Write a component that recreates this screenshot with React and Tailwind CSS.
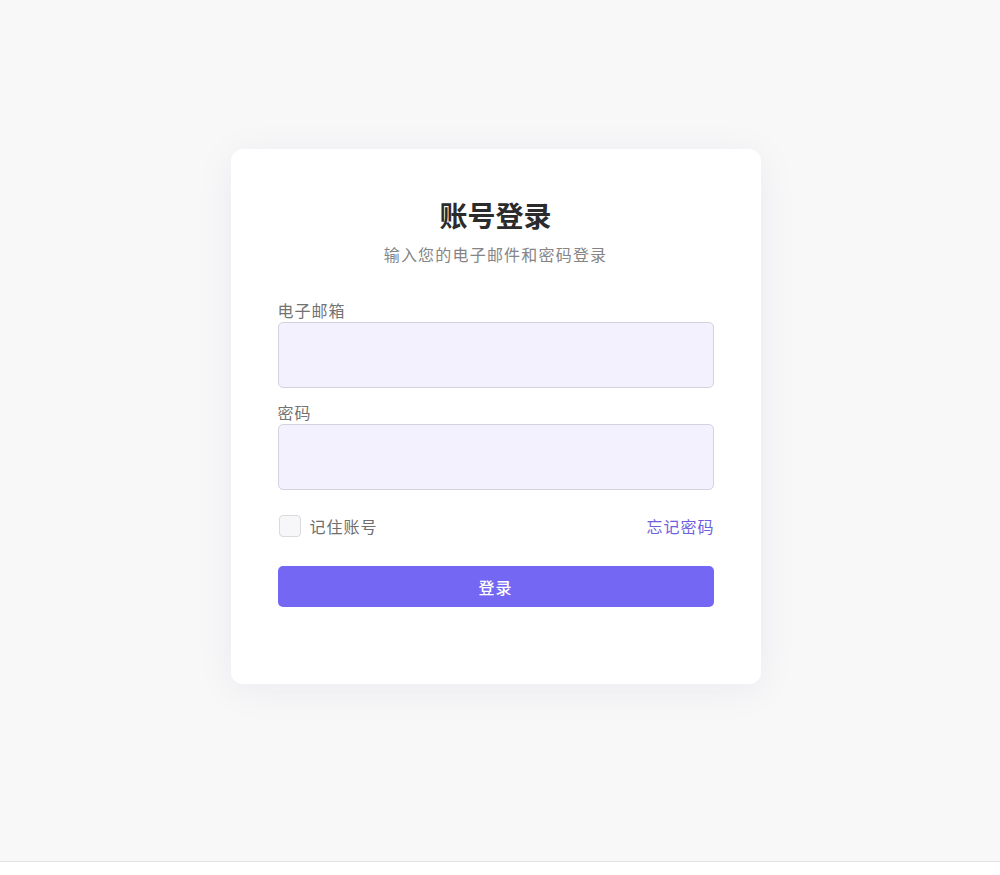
export default function App() {
  return (
    <div
      className="bg-white"
      style={{ fontFamily: '"Noto Sans CJK SC", "Noto Sans", sans-serif' }}
    >
      {/* Page area */}
      <div className="min-h-[862px] bg-[#f8f8f9] border-b border-[#e2e2e4] flex justify-center items-start pt-[149px] pr-[9px]">
        {/* Login card */}
        <div className="w-[530px] bg-white rounded-xl shadow-[0_6px_40px_rgba(30,30,60,0.06)] px-[47px] pt-12 pb-[77px]">
          <h1 className="text-center text-[28px] leading-9 font-bold text-[#2b2b2b]">
            账号登录
          </h1>
          <p className="mt-[9px] text-center text-base leading-6 tracking-[1.2px] text-[#858585]">
            输入您的电子邮件和密码登录
          </p>

          <form className="mt-8" onSubmit={(e) => e.preventDefault()}>
            <label className="block text-base leading-6 tracking-[1px] text-[#727272]">电子邮箱</label>
            <input
              type="email"
              className="block w-full h-[66px] bg-[#f2f1fd] border border-[#d3d2de] rounded-[5px] px-3 outline-none"
            />

            <label className="block mt-3 text-base leading-6 tracking-[1px] text-[#727272]">密码</label>
            <input
              type="password"
              className="block w-full h-[66px] bg-[#f2f1fd] border border-[#d3d2de] rounded-[5px] px-3 outline-none"
            />

            <div className="mt-6 h-6 flex items-center justify-between">
              <label className="flex items-center gap-[9px] text-base tracking-[1px] text-[#6e6e6e]">
                <span className="w-[22px] h-[22px] rounded-[4px] border border-[#dadade] bg-[#f7f7f9] ml-px" />
                记住账号
              </label>
              <a href="#" className="text-base tracking-[1px] -mr-px text-[#6e5fdf]">
                忘记密码
              </a>
            </div>

            <button
              type="submit"
              className="mt-7 w-full h-[41px] rounded-[5px] bg-[#7367f4] text-white text-base font-medium tracking-[1px]"
            >
              登录
            </button>
          </form>
        </div>
      </div>
    </div>
  );
}
